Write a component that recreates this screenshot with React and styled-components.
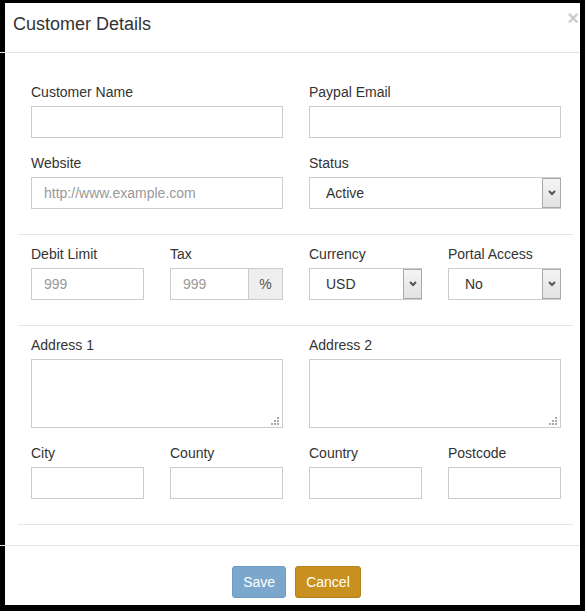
import React from 'react'
import styled, { createGlobalStyle } from 'styled-components'

const GlobalStyle = createGlobalStyle`
  html, body {
    margin: 0;
    padding: 0;
    background: #000;
  }
  body {
    font-family: "Liberation Sans", Arial, sans-serif;
    font-size: 14px;
    color: #333;
  }
  * { box-sizing: border-box; }
`

const Frame = styled.div`
  height: 611px;
  padding: 3px 5px 6px 5px;
  background: #000;
`

const Modal = styled.div`
  height: 100%;
  background: #fff;
  display: flex;
  flex-direction: column;
`

const Header = styled.div`
  display: flex;
  justify-content: space-between;
  align-items: flex-start;
  padding: 11px 0 18px 8px;
`

const Title = styled.h4`
  margin: 0;
  font-size: 18px;
  font-weight: normal;
  line-height: 20px;
  color: #333;
`

const Close = styled.button`
  margin: -6px 1px 0 0;
  padding: 0;
  border: 0;
  background: transparent;
  font-family: "Liberation Sans", Arial, sans-serif;
  font-size: 20px;
  font-weight: 700;
  line-height: 1;
  color: #000;
  opacity: 0.2;
  text-shadow: 0 1px 0 #fff;
  cursor: pointer;
`

// the lines run a little past the left edge, over the dark frame
const Rule = styled.div`
  height: 1px;
  background: #e5e5e5;
  margin-left: ${props => props.$bleed ? '-5px' : '0'};
`

const Body = styled.div`
  padding: 29px 7px 20px 13px;
`

const Section = styled.div`
  display: grid;
  grid-template-columns: repeat(4, 1fr);
  column-gap: 26px;
  padding: 0 12px 0 13px;
`

const Divider = styled.hr`
  border: 0;
  height: 1px;
  background: #e5e5e5;
  margin: 10px 0 ${props => props.$last ? '0' : '9px'};
`

const Field = styled.div`
  grid-column: span ${props => props.$span || 1};
  margin-bottom: 15px;
`

const Label = styled.label`
  display: block;
  font-size: 14px;
  line-height: 20px;
  margin-bottom: 4px;
  color: #333;
`

const Input = styled.input`
  display: block;
  width: 100%;
  height: 32px;
  padding: 0 12px;
  border: 1px solid #ccc;
  border-radius: 0;
  font-family: inherit;
  font-size: 14px;
  color: #555;
  background: #fff;
  outline: none;

  &::placeholder {
    color: #999;
  }
`

const InputGroup = styled.div`
  display: flex;

  ${Input} {
    flex: 1;
    min-width: 0;
  }
`

const Addon = styled.span`
  width: 34px;
  height: 32px;
  display: flex;
  align-items: center;
  justify-content: center;
  border: 1px solid #ccc;
  border-left: 0;
  background: #eee;
  color: #555;
  font-size: 14px;
`

const SelectWrap = styled.div`
  position: relative;
`

const Select = styled.select`
  display: block;
  width: 100%;
  height: 32px;
  padding: 0 20px 0 16px;
  border: 1px solid #ccc;
  border-radius: 0;
  appearance: none;
  font-family: inherit;
  font-size: 14px;
  color: #333;
  background: #fff;
  outline: none;
`

const Arrow = styled.span`
  position: absolute;
  top: 1px;
  right: 0;
  bottom: 1px;
  width: 19px;
  border: 1px solid #a9a9a9;
  background: linear-gradient(#f4f4f4, #e2e2e2);
  display: flex;
  align-items: center;
  justify-content: center;
  pointer-events: none;
`

const AreaWrap = styled.div`
  position: relative;
`

const TextArea = styled.textarea`
  display: block;
  width: 100%;
  height: 69px;
  padding: 6px 12px;
  border: 1px solid #ccc;
  border-radius: 0;
  resize: none;
  font-family: inherit;
  font-size: 14px;
  outline: none;
`

const Grip = styled.svg`
  position: absolute;
  right: 4px;
  bottom: 3px;
`

const Footer = styled.div`
  display: flex;
  justify-content: center;
  gap: 9px;
  padding: 20px 0 7px 8px;
`

const Button = styled.button`
  height: 32px;
  padding: 5px 10px;
  border: 1px solid ${props => props.$variant === 'save' ? '#6e9bc4' : '#b4811b'};
  border-radius: 3px;
  background: ${props => props.$variant === 'save' ? '#7ba7cd' : '#c8901f'};
  color: #fff;
  font-family: inherit;
  font-size: 14px;
  line-height: 20px;
  cursor: pointer;
`

const Chevron = () => (
  <svg width="8" height="6" viewBox="0 0 8 6">
    <polyline points="1,1 4,4 7,1" fill="none" stroke="#555" strokeWidth="2" />
  </svg>
)

const Dots = () => (
  <Grip width="8" height="8" viewBox="0 0 8 8">
    <rect x="6" y="0" width="2" height="2" fill="#aaa" />
    <rect x="3" y="3" width="2" height="2" fill="#aaa" />
    <rect x="6" y="3" width="2" height="2" fill="#aaa" />
    <rect x="0" y="6" width="2" height="2" fill="#aaa" />
    <rect x="3" y="6" width="2" height="2" fill="#aaa" />
    <rect x="6" y="6" width="2" height="2" fill="#aaa" />
  </Grip>
)

const DropDown = ({ value, options }) => (
  <SelectWrap>
    <Select defaultValue={value}>
      {options.map(o => <option key={o}>{o}</option>)}
    </Select>
    <Arrow><Chevron /></Arrow>
  </SelectWrap>
)

const Area = () => (
  <AreaWrap>
    <TextArea />
    <Dots />
  </AreaWrap>
)

export default function App() {
  return (
    <Frame>
      <GlobalStyle />
      <Modal>
        <Header>
          <Title>Customer Details</Title>
          <Close>×</Close>
        </Header>
        <Rule $bleed />
        <Body>
          <Section>
            <Field $span={2}>
              <Label>Customer Name</Label>
              <Input />
            </Field>
            <Field $span={2}>
              <Label>Paypal Email</Label>
              <Input />
            </Field>
            <Field $span={2}>
              <Label>Website</Label>
              <Input placeholder="http://www.example.com" />
            </Field>
            <Field $span={2}>
              <Label>Status</Label>
              <DropDown value="Active" options={['Active', 'Inactive']} />
            </Field>
          </Section>
          <Divider />
          <Section>
            <Field>
              <Label>Debit Limit</Label>
              <Input placeholder="999" />
            </Field>
            <Field>
              <Label>Tax</Label>
              <InputGroup>
                <Input placeholder="999" />
                <Addon>%</Addon>
              </InputGroup>
            </Field>
            <Field>
              <Label>Currency</Label>
              <DropDown value="USD" options={['USD', 'GBP', 'EUR']} />
            </Field>
            <Field>
              <Label>Portal Access</Label>
              <DropDown value="No" options={['No', 'Yes']} />
            </Field>
          </Section>
          <Divider />
          <Section>
            <Field $span={2}>
              <Label>Address 1</Label>
              <Area />
            </Field>
            <Field $span={2}>
              <Label>Address 2</Label>
              <Area />
            </Field>
            <Field>
              <Label>City</Label>
              <Input />
            </Field>
            <Field>
              <Label>County</Label>
              <Input />
            </Field>
            <Field>
              <Label>Country</Label>
              <Input />
            </Field>
            <Field>
              <Label>Postcode</Label>
              <Input />
            </Field>
          </Section>
          <Divider $last />
        </Body>
        <Rule $bleed />
        <Footer>
          <Button $variant="save">Save</Button>
          <Button $variant="cancel">Cancel</Button>
        </Footer>
      </Modal>
    </Frame>
  )
}
